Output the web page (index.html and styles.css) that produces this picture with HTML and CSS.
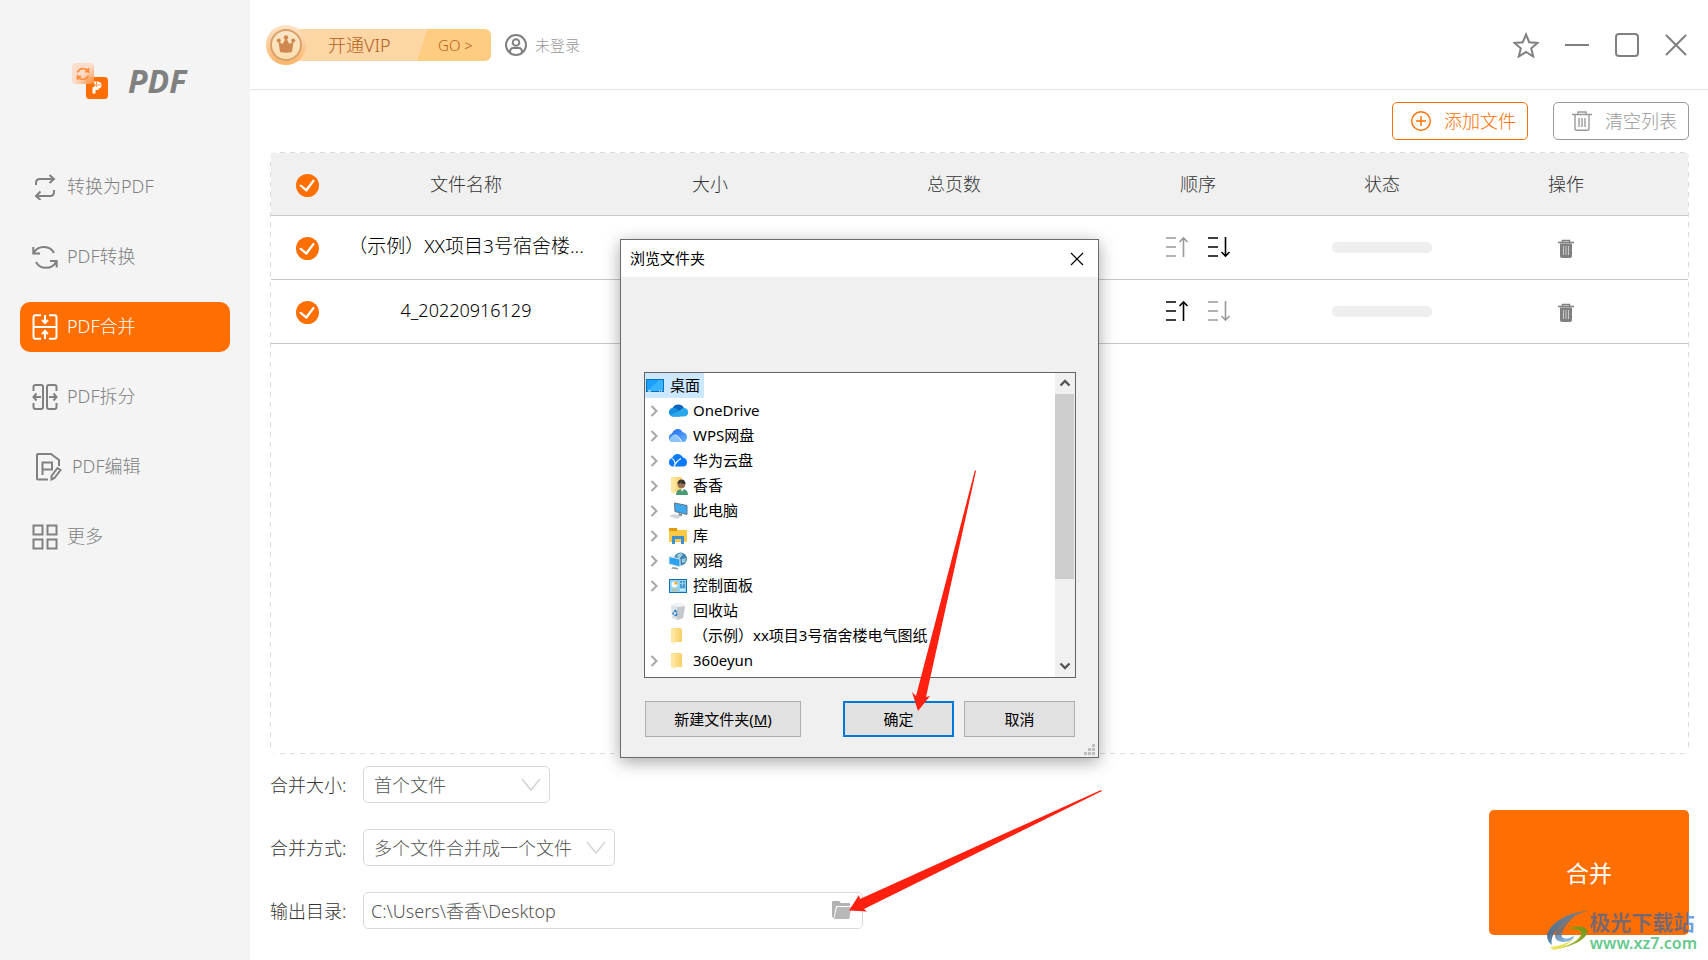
FILE: index.html
```html
<!DOCTYPE html>
<html lang="zh-CN">
<head>
<meta charset="utf-8">
<title>PDF</title>
<link rel="stylesheet" href="styles.css">
</head>
<body>
<svg class="defs" width="0" height="0" aria-hidden="true">
  <defs>
    <linearGradient id="medal" x1="0" y1="0" x2="0" y2="1"><stop offset="0" stop-color="#fde3c8"/><stop offset="1" stop-color="#fbb568"/></linearGradient>
    <linearGradient id="coin" x1="0" y1="0" x2="0" y2="1"><stop offset="0" stop-color="#f9e6c8"/><stop offset="1" stop-color="#fbdfae"/></linearGradient>
    <linearGradient id="fade" x1="0" y1="0" x2="1" y2="1"><stop offset=".5" stop-color="#fbdcc8"/><stop offset="1" stop-color="#ff8a36"/></linearGradient>
    <linearGradient id="folder" x1="0" y1="0" x2="1" y2="0"><stop offset="0" stop-color="#ffe9a6"/><stop offset="1" stop-color="#f7cf66"/></linearGradient>
    <linearGradient id="swirl" x1="0" y1="0" x2=".4" y2="1"><stop offset="0" stop-color="#7a8a90"/><stop offset=".6" stop-color="#56708c"/><stop offset="1" stop-color="#5f9fd8"/></linearGradient>
    <linearGradient id="swirl2" x1="1" y1="0" x2="0" y2="1"><stop offset="0" stop-color="#6f8f10"/><stop offset=".6" stop-color="#9cb832"/><stop offset="1" stop-color="#f2e668"/></linearGradient>
    <linearGradient id="wps" x1="0" y1="0" x2="1" y2="1"><stop offset="0" stop-color="#1a66f0"/><stop offset="1" stop-color="#69b4ff"/></linearGradient>
  </defs>
  <symbol id="i-up" viewBox="0 0 24 22"><path d="M1 2h10M1 11h10M1 20h10M18.500 21V2M14.500 6l4-4 4 4"/></symbol>
  <symbol id="i-down" viewBox="0 0 24 22"><path d="M1 2h10M1 11h10M1 20h10M18.500 1v19M14.500 16l4 4 4-4"/></symbol>
  <symbol id="i-trash" viewBox="0 0 18 20"><path d="M5.500 3V1.500h7V3M1 3.500h16" fill="none" stroke="#808080" stroke-width="1.600"/><path d="M3 4.500h12V17q0 2-2 2H5q-2 0-2-2z" fill="#808080"/><path d="M6.500 7v9M9 7v9M11.500 7v9" stroke="#ccc" stroke-width="1"/></symbol>
  <symbol id="i-chev" viewBox="0 0 8 12"><path d="M1.500 1l5 5-5 5" fill="none" stroke="#a6a6a6" stroke-width="2"/></symbol>
  <symbol id="i-folder" viewBox="0 0 20 18"><path d="M3 1h9l2 1v13H5l-2-1z" fill="url(#folder)"/><path d="M3 1l4 2v14l-4-2z" fill="#ffe7a0"/></symbol>
</svg>

<aside class="sidebar">
  <div class="brand">
    <svg width="36" height="36" viewBox="0 0 36 36"><rect x="14" y="14" width="22" height="22" rx="3.500" fill="#ff6e00"/><path d="M21.500 18.500h3q5 0 5 3.500t-3 3.500v1.500h-3v3.500h-3v-6l3-1.500z" fill="#fff"/><path d="M24.500 18v6M21 22h8" stroke="#ff9a4d" stroke-width="1"/><rect width="22" height="21" rx="4" fill="url(#fade)" opacity=".92"/><path d="M5.500 9.500a6 6 0 0 1 10-2l1 1V5M16.500 8.500H13M16.500 12.500a6 6 0 0 1-10 2l-1-1V17M5.500 13.500H9" fill="none" stroke="#ff8b3d" stroke-width="1.800"/></svg>
    <span>PDF</span>
  </div>
  <nav class="menu">
    <a href="#"><svg width="26" height="26" viewBox="0 0 26 26"><path d="M4 11V9q0-4 4-4h13M22 16v2q0 4-4 4H5M17.500 1l4.500 4-4.500 4M8.500 17.500L4 22l4.500 4"/></svg><span>转换为PDF</span></a>
    <a href="#"><svg width="26" height="26" viewBox="0 0 26 26"><path d="M2 8.500A11 10 0 0 1 22 9M24 18A11 10 0 0 1 4 18M1.300 3v6.500H8M24.700 23.500V17H18"/></svg><span>PDF转换</span></a>
    <a href="#" class="active"><svg width="26" height="26" viewBox="0 0 26 26"><path d="M9 1.200H3.500q-2 0-2 2v19.600q0 2 2 2H9M17 1.200h5.500q2 0 2 2v19.600q0 2-2 2H17M1 13h24M13 1v8M10 6l3 3 3-3M13 25v-8M10 20l3-3 3 3"/></svg><span>PDF合并</span></a>
    <a href="#"><svg width="26" height="26" viewBox="0 0 26 26"><path d="M1.500 7V3q0-2 2-2H9q2 0 2 2v20q0 2-2 2H3.500q-2 0-2-2v-4M24.500 7V3q0-2-2-2H17q-2 0-2 2v20q0 2 2 2h5.500q2 0 2-2v-4M9 13H1.500M4.500 9.500L1.500 13l3 3.500M17 13h7.500M21.500 9.500l3 3.500-3 3.500"/></svg><span>PDF拆分</span></a>
    <a href="#" class="edit"><svg width="26" height="28" viewBox="0 0 26 28"><path d="M12 26.500H2q-1 0-1-1V2q0-1 1-1h13l8 6v6M6.500 22V9.500H16v7H7M15.500 26.500v-3.500l6-8 3 2-6 8z"/></svg><span>PDF编辑</span></a>
    <a href="#"><svg width="26" height="26" viewBox="0 0 26 26"><path d="M1.500 1.500h9v9h-9zM15.500 1.500h9v9h-9zM1.500 15.500h9v9h-9zM15.500 15.500h9v9h-9z"/></svg><span>更多</span></a>
  </nav>
</aside>

<main class="main">
  <header class="topbar">
    <button class="vip" type="button">
      <svg class="medal" width="40" height="40" viewBox="0 0 40 40"><circle cx="20" cy="20" r="20" fill="url(#medal)"/><circle cx="20" cy="20" r="15" fill="url(#coin)" stroke="#d9a06c" stroke-width="2"/><path d="M14 27l-1.500-10.500 4 2.500L20 13l3.500 6 4-2.500L26 27q-6 1.500-12 0z" fill="#cf8850"/><circle cx="20" cy="12.500" r="2.200" fill="#cf8850"/><circle cx="12.800" cy="15.500" r="2" fill="#cf8850"/><circle cx="27.200" cy="15.500" r="2" fill="#cf8850"/></svg>
      <span class="vip-label">开通VIP</span><span class="vip-go">GO &gt;</span>
    </button>
    <button class="login" type="button"><svg width="22" height="22" viewBox="0 0 22 22"><circle cx="11" cy="11" r="10"/><circle cx="11" cy="8.500" r="3.300"/><path d="M5 18.500Q5 14 8 14h6q3 0 3 4.500"/></svg>未登录</button>
    <div class="window-tools">
      <button type="button" aria-label="收藏"><svg width="26" height="26" viewBox="0 0 26 26"><path d="M13 2.500l3.200 7.700 8.300.7-6.300 5.400 2 8.200-7.200-4.500-7.200 4.500 2-8.200L1.500 10.900l8.300-.7z"/></svg></button>
      <button type="button" aria-label="最小化"><svg width="24" height="24" viewBox="0 0 24 24"><path d="M0 12h24"/></svg></button>
      <button type="button" aria-label="最大化"><svg width="24" height="24" viewBox="0 0 24 24"><rect x="1" y="1" width="22" height="22" rx="3"/></svg></button>
      <button type="button" aria-label="关闭"><svg width="22" height="22" viewBox="0 0 22 22"><path d="M1 1l20 20M21 1L1 21"/></svg></button>
    </div>
  </header>

  <div class="toolbar">
    <button type="button" class="tool add"><svg width="20" height="20" viewBox="0 0 20 20"><circle cx="10" cy="10" r="9.300"/><path d="M10 5v10M5 10h10"/></svg>添加文件</button>
    <button type="button" class="tool clear"><svg width="20" height="20" viewBox="0 0 20 20"><path d="M0 3.500h20M6 3V1h8v2M3 4v13.500q0 1.800 1.800 1.800h10.400q1.800 0 1.800-1.800V4M7 7v9M10 7v9M13 7v9"/></svg>清空列表</button>
  </div>

  <section class="list">
    <table>
      <colgroup><col class="c-check"><col><col><col><col><col class="c-state"><col></colgroup>
      <thead><tr><th><input type="checkbox" checked aria-label="全选"></th><th>文件名称</th><th>大小</th><th>总页数</th><th>顺序</th><th>状态</th><th>操作</th></tr></thead>
      <tbody>
        <tr><td><input type="checkbox" checked aria-label="选择第1个文件"></td><td class="long">（示例）XX项目3号宿舍楼...</td><td>286.4KB</td><td>1</td>
          <td><div class="order"><button type="button" class="off" aria-label="上移"><svg width="24" height="22"><use href="#i-up"/></svg></button><button type="button" aria-label="下移"><svg width="24" height="22"><use href="#i-down"/></svg></button></div></td>
          <td><progress value="0" max="100" aria-label="进度"></progress></td><td><button type="button" aria-label="删除"><svg width="18" height="20"><use href="#i-trash"/></svg></button></td></tr>
        <tr><td><input type="checkbox" checked aria-label="选择第2个文件"></td><td>4_20220916129</td><td></td><td></td>
          <td><div class="order"><button type="button" aria-label="上移"><svg width="24" height="22"><use href="#i-up"/></svg></button><button type="button" class="off" aria-label="下移"><svg width="24" height="22"><use href="#i-down"/></svg></button></div></td>
          <td><progress value="0" max="100" aria-label="进度"></progress></td><td><button type="button" aria-label="删除"><svg width="18" height="20"><use href="#i-trash"/></svg></button></td></tr>
      </tbody>
    </table>
  </section>

  <footer class="options">
    <form class="form">
      <div class="row"><label for="size">合并大小:</label><div class="pick short"><select id="size"><option>首个文件</option></select><svg width="20" height="14" viewBox="0 0 20 14"><path d="M1 1l9 11 9-11"/></svg></div></div>
      <div class="row"><label for="mode">合并方式:</label><div class="pick wide"><select id="mode"><option>多个文件合并成一个文件</option></select><svg width="20" height="14" viewBox="0 0 20 14"><path d="M1 1l9 11 9-11"/></svg></div></div>
      <div class="row"><label for="path">输出目录:</label><div class="path"><input id="path" type="text" value="C:\Users\香香\Desktop"><button type="button" aria-label="浏览"><svg width="19" height="18" viewBox="0 0 19 18"><path d="M0 1q0-1 1-1h6l2 2h8q1 0 1 1v2H4L1.500 17Q0 17 0 15z" fill="#b2b2b2"/><path d="M5 6h13q1 0 1 1l-1.500 10q0 1-1 1H2z" fill="#b8b8b8"/></svg></button>
        <svg class="arrow-path" width="256" height="124" viewBox="0 0 256 124"><path d="M253 0l1 1L16 119l3 2.500-18-1L11 105l1 4z" fill="#ff2010"/></svg></div></div>
    </form>
    <div class="submit">
      <button type="button" class="merge">合并</button>
      <div class="mark">
        <svg width="44" height="40" viewBox="0 0 44 40"><path d="M42 0C22 1 4 12 1 24q0 7 5 10C3 20 22 4 42 0z" fill="url(#swirl)"/><path d="M30 4C16 9 8 18 9 26q2 7 14 4 5-2 5-5-9 5-12 1-2-7 14-22z" fill="url(#swirl)" opacity=".8"/><path d="M22 17q16-4 19 2c3 8-17 19-38 20 20-3 33-11 32-17-1-5-8-3-13-5z" fill="url(#swirl2)"/><path d="M4 36q14-1 24-9-7 9-20 12z" fill="#e9e45e"/></svg>
        <div class="mark-text"><b>极光下载站</b><span>www.xz7.com</span></div>
      </div>
    </div>
  </footer>
</main>

<div class="dialog" role="dialog" aria-labelledby="dlg-title">
  <div class="dlg-head"><span id="dlg-title">浏览文件夹</span><button type="button" aria-label="关闭"><svg width="14" height="14" viewBox="0 0 14 14"><path d="M1 1l12 12M13 1L1 13" stroke="#000" stroke-width="1.200"/></svg></button></div>
  <div class="dlg-body">
    <div class="tree">
      <ul>
        <li class="root"><span><svg width="20" height="18" viewBox="0 0 20 18"><rect x="1.500" y="2.500" width="17" height="12" fill="#18a0fb" stroke="#0a70b8"/><path d="M2 14L14 3h4v11z" fill="#36b2ff"/><path d="M3 14h3M14 14h1M16 14h1" stroke="#fff"/></svg>桌面</span></li>
        <li><svg class="chev"><use href="#i-chev"/></svg><svg width="20" height="18" viewBox="0 0 20 18"><path d="M5 14.500a4.500 4.500 0 0 1-.5-8.500A6.500 6.500 0 0 1 16 6l-4 8.500z" fill="#0a64b8"/><path d="M4.500 6q3-.8 6 2L2 13.500A4.500 4.500 0 0 1 4.500 6z" fill="#1490df"/><path d="M2 13l11-5.500q1-2 3-1.500a4.200 4.200 0 0 1 0 8.500H5q-2 0-3-1.500z" fill="#28a8ea"/></svg>OneDrive</li>
        <li><svg class="chev"><use href="#i-chev"/></svg><svg width="20" height="18" viewBox="0 0 20 18"><path d="M4 15A4.500 4.500 0 0 1 4 6.500Q6 2 10 2q3 0 4.500 3 4.500 1 4.500 5 0 5-4 5z" fill="url(#wps)"/><path d="M1.500 12Q4 6.500 8 8q3 1.500 6 7H4q-2-1-2.500-3z" fill="#8cc4ff"/><path d="M7 8q3 0 7 7" fill="none" stroke="#e8f4ff"/></svg>WPS网盘</li>
        <li><svg class="chev"><use href="#i-chev"/></svg><svg width="20" height="18" viewBox="0 0 20 18"><path d="M4 14.500A4.500 4.500 0 0 1 4 6Q6 2 9.500 2 13 2 15 5.500q4 1 4 5 0 4-4 4z" fill="#0a7bff"/><path d="M4.500 6.500q2.500 2 2.500 5M6 14.500q2-5 7-8" fill="none" stroke="#fff" stroke-width="1.200"/></svg>华为云盘</li>
        <li><svg class="chev"><use href="#i-chev"/></svg><svg width="20" height="18" viewBox="0 0 20 18"><path d="M3 0h10l1 1v14H5l-2-1z" fill="url(#folder)"/><path d="M3 0l4 2v15l-4-2z" fill="#ffe7a0"/><path d="M8 18q0-6 6-6t6 6z" fill="#4b9a76"/><path d="M13 12l1 3 1.500-3z" fill="#fff"/><circle cx="13.500" cy="7.500" r="3.800" fill="#9b7052"/><path d="M9.500 7q0-4.500 4-4.500T17.500 7q-4 0-5-1.500Q11 7 9.500 7z" fill="#3a3532"/></svg>香香</li>
        <li><svg class="chev"><use href="#i-chev"/></svg><svg width="20" height="18" viewBox="0 0 20 18"><path d="M6.500 1l12.500 2.500v9L7 9.500z" fill="#3fa9ee" stroke="#5e7382"/><path d="M11 11l3 1v2h-4z" fill="#7a8790"/><path d="M1 14l5-2 8 2-5 3z" fill="#cfd5d9"/></svg>此电脑</li>
        <li><svg class="chev"><use href="#i-chev"/></svg><svg width="20" height="18" viewBox="0 0 20 18"><path d="M1 1h7l2 2h9v12H1z" fill="#fcc944"/><path d="M1 1h8v3H1z" fill="#e19b10"/><path d="M4 17V9h12v8h-3v-5H7v5z" fill="#3a90d0"/></svg>库</li>
        <li><svg class="chev"><use href="#i-chev"/></svg><svg width="20" height="18" viewBox="0 0 20 18"><circle cx="12.500" cy="7" r="6.500" fill="#3f84b4"/><path d="M9 3q3-3 6-1l-2 3-3 2zM14 7l4-1-1 4-3 1z" fill="#9fd0d4"/><path d="M1 4.500l11 2.500v8L1 12z" fill="#2da3ee" stroke="#d8e6ee"/><path d="M5 15l5 1v1.500l-7-1z" fill="#8d989f"/></svg>网络</li>
        <li><svg class="chev"><use href="#i-chev"/></svg><svg width="20" height="18" viewBox="0 0 20 18"><rect x="1.500" y="2.500" width="17" height="13" fill="#8fd3fa" stroke="#1272ae"/><circle cx="6.500" cy="7.500" r="3" fill="#fff"/><path d="M6.500 7.500V4.500a3 3 0 0 1 3 3z" fill="#f3a41c"/><path d="M12 5h2M15 5h2M12 8h2M15 8h2M12 10h5" stroke="#0f5f99"/><path d="M4 13h6" stroke="#f3a41c"/><path d="M12 13h5" stroke="#fff"/></svg>控制面板</li>
        <li class="leaf"><svg width="20" height="18" viewBox="0 0 20 18"><path d="M3 3l5-2 8 1 1 3-2 11-6 2-5-2z" fill="#dfe3e6"/><path d="M3 3l7 2 7-1-2 12-6 2V5z" fill="#c3c8cc"/><path d="M3 3l5-2 8 1 1 2-7 1z" fill="#f1f3f4"/><path d="M6 9.500l1.500-1 1 2M9 11.500l-1 2H6.500M5.500 12.500l-.5-2" fill="none" stroke="#1477c8" stroke-width="1.500"/></svg>回收站</li>
        <li class="leaf"><svg width="20" height="18"><use href="#i-folder"/></svg>（示例）xx项目3号宿舍楼电气图纸</li>
        <li><svg class="chev"><use href="#i-chev"/></svg><svg width="20" height="18"><use href="#i-folder"/></svg>360eyun</li>
      </ul>
      <div class="scroll"><svg width="12" height="8" viewBox="0 0 12 8"><path d="M1.500 6.500L6 2l4.500 4.500"/></svg><i></i><svg width="12" height="8" viewBox="0 0 12 8"><path d="M1.500 1.500L6 6l4.500-4.500"/></svg></div>
    </div>
    <div class="dlg-actions">
      <button type="button" class="new">新建文件夹(<u>M</u>)</button>
      <button type="button" class="ok">确定</button>
      <button type="button">取消</button>
    </div>
  </div>
  <svg class="grip" width="11" height="11" viewBox="0 0 11 11"><path d="M8 0h3v3H8zM4 4h3v3H4zM8 4h3v3H8zM0 8h3v3H0zM4 8h3v3H4zM8 8h3v3H8z" fill="#bfbfbf"/></svg>
  <svg class="arrow-ok" width="66" height="242" viewBox="0 0 66 242"><path d="M64 0l1 1L15 227l4-1L7 241 1 222l4 4z" fill="#ff2010"/></svg>
</div>
</body>
</html>
```
FILE: styles.css
```css
* { box-sizing: border-box; }
body {
  margin: 0;
  min-height: 100vh;
  display: flex;
  position: relative;
  background: #fff;
  color: #333;
  font: 300 18px/24px "Noto Sans", "Noto Sans CJK SC", sans-serif;
}
button, input, select { font: inherit; color: inherit; margin: 0; }
button { padding: 0; border: 0; background: none; }
svg { display: block; flex: none; }
.defs { position: absolute; }

/* Sidebar */
.sidebar { width: 250px; flex: none; background: #f4f4f4; color: #808080; }
.brand {
  display: flex;
  align-items: center;
  gap: 20px;
  height: 162px;
  padding-left: 72px;
  font: italic 700 32px/40px "Noto Sans", sans-serif;
}
.menu { display: grid; gap: 20px; padding: 0 20px; }
.menu a {
  display: flex;
  align-items: center;
  gap: 9px;
  height: 50px;
  padding-left: 12px;
  border-radius: 10px;
  color: inherit;
  text-decoration: none;
}
.menu span { padding-bottom: 2px; }
.menu svg { fill: none; stroke: currentColor; stroke-width: 2; }
.menu .edit { padding-left: 16px; gap: 10px; }
.menu .active { background: #ff6e00; color: #fff; }

/* Header */
.main { flex: 1; min-width: 0; display: flex; flex-direction: column; }
.topbar {
  display: flex;
  align-items: center;
  height: 90px;
  padding: 0 21px 0 16px;
  border-bottom: 1px solid #e6e6e6;
}
.vip {
  position: relative;
  display: flex;
  height: 32px;
  width: 221px;
  margin-left: 4px;
  border-radius: 6px;
  background: linear-gradient(108deg, #fdd6a5 68%, #ffcd82 68%);
  color: #b3611d;
  line-height: 32px;
}
.medal { position: absolute; left: -4px; top: -4px; }
.vip-label { width: 150px; padding-left: 58px; text-align: left; white-space: nowrap; }
.vip-go { flex: 1; font-size: 15px; text-align: center; }
.login { display: flex; align-items: center; gap: 8px; margin-left: 14px; font-size: 15px; color: #999; }
.login svg { fill: none; stroke: #808080; stroke-width: 2; }
.window-tools { display: flex; align-items: center; gap: 26px; margin-left: auto; }
.window-tools svg { fill: none; stroke: #808080; stroke-width: 2; }

/* Toolbar */
.toolbar { display: flex; justify-content: flex-end; gap: 25px; padding: 12px 19px; }
.tool {
  display: flex;
  align-items: center;
  gap: 13px;
  width: 136px;
  height: 38px;
  padding-left: 18px;
  border: 1px solid #999;
  border-radius: 5px;
  color: #999;
}
.tool svg { fill: none; stroke: currentColor; stroke-width: 1.4; }
.add { border-color: #ff6e00; color: #ff6e00; }

/* File list, framed by long dashes on each side */
.list {
  flex: 1;
  margin: 0 19px 0 20px;
  padding: 1px;
  border-radius: 6px;
  background:
    repeating-linear-gradient(90deg, #dcdcdc 0 5px, transparent 5px 10px) top / 100% 1px no-repeat,
    repeating-linear-gradient(90deg, #dcdcdc 0 5px, transparent 5px 10px) bottom / 100% 1px no-repeat,
    repeating-linear-gradient(#dcdcdc 0 5px, transparent 5px 10px) left / 1px 100% no-repeat,
    repeating-linear-gradient(#dcdcdc 0 5px, transparent 5px 10px) right / 1px 100% no-repeat;
}
table { width: 100%; table-layout: fixed; border-collapse: collapse; text-align: center; }
.c-check { width: 73px; }
.c-state { width: 124px; }
th, td { height: 64px; padding: 0; border-bottom: 1px solid #c8c8c8; white-space: nowrap; }
th { height: 62px; background: #f0f0f0; font-weight: 300; }
td { color: #000; }
td:nth-child(2) { padding-bottom: 2px; }
.long { font-size: 19px; }
td button, th input, td input { vertical-align: middle; }
input[type="checkbox"] {
  appearance: none;
  width: 23px;
  height: 23px;
  border-radius: 50%;
  background: #ff6e00;
}
input[type="checkbox"]::before {
  content: "";
  display: block;
  height: 23px;
  background: #fff;
  clip-path: polygon(3px 12px, 5px 11px, 10px 15px, 17px 6px, 19px 7px, 11px 18px, 10px 18px);
}
.order { display: flex; justify-content: center; gap: 18px; }
.order svg { fill: none; stroke: #000; stroke-width: 1.6; }
.order .off svg { stroke: #999; }
progress {
  appearance: none;
  display: block;
  width: 100px;
  height: 11px;
  margin: 0 auto;
  border: 0;
  border-radius: 5px;
  overflow: hidden;
  background: #eee;
}
progress::-webkit-progress-bar { background: #eee; }

/* Output options */
.options { display: flex; justify-content: space-between; padding: 12px 19px 25px 20px; }
.form { display: grid; gap: 26px; align-content: start; padding-bottom: 6px; }
.row { display: flex; align-items: center; }
.row label { width: 93px; white-space: nowrap; }
.pick, .path { position: relative; height: 37px; }
.short { width: 187px; }
.wide { width: 252px; }
.path { width: 500px; }
select, .path input {
  width: 100%;
  height: 100%;
  padding: 0 10px;
  appearance: none;
  border: 1px solid #d9d9d9;
  border-radius: 5px;
  background: #fff;
  color: #555;
}
.path input { padding: 0 40px 2px 7px; }
.pick svg { position: absolute; right: 9px; top: 12px; fill: none; stroke: #d4d4d4; stroke-width: 1.5; pointer-events: none; }
.path button { position: absolute; right: 12px; top: 9px; }
.arrow-path { position: absolute; left: 485px; top: -102px; pointer-events: none; }
.submit { position: relative; align-self: flex-end; }
.merge { width: 200px; height: 125px; border-radius: 5px; background: #ff6e00; color: #fff; font-size: 23px; font-weight: 400; }
.mark { position: absolute; right: -8px; bottom: -18px; display: flex; }
.mark-text { display: grid; }
.mark-text b {
  font-size: 21px;
  line-height: 22px;
  font-weight: 700;
  color: transparent;
  background: linear-gradient(90deg, #776870 92%, #6fa3dc 92%);
  background-clip: text;
}
.mark-text span { font-size: 16px; line-height: 20px; font-weight: 600; color: #66c98c; }

/* Folder dialog */
.dialog {
  position: absolute;
  left: 620px;
  top: 239px;
  width: 479px;
  border: 1px solid #6b6b6b;
  background: #f0f0f0;
  box-shadow: 0 4px 16px rgba(0, 0, 0, 0.35);
  color: #000;
  font: 400 15px/25px "Noto Sans", "Noto Sans CJK SC", sans-serif;
}
.dlg-head { display: flex; justify-content: space-between; align-items: center; height: 37px; padding: 0 14px 0 9px; background: #fff; }
.dlg-body { padding: 95px 23px 20px; }
.tree { display: flex; height: 306px; margin-right: -1px; border: 1px solid #646464; background: #fff; }
.tree ul { flex: 1; margin: 0; padding: 0; list-style: none; white-space: nowrap; }
.tree li { display: flex; align-items: center; gap: 5px; height: 25px; padding-left: 5px; }
.tree .chev { width: 8px; height: 12px; margin-right: 5px; }
.tree .leaf { padding-left: 23px; }
.tree .root { padding: 0; }
.root span { display: flex; align-items: center; gap: 5px; padding-right: 4px; background: #cce8ff; }
.scroll { display: flex; flex-direction: column; align-items: center; width: 20px; background: #f0f0f0; }
.scroll svg { margin: 6px 0 7px; fill: none; stroke: #555; stroke-width: 2.4; }
.scroll i { width: 100%; height: 185px; margin-bottom: auto; background: #cdcdcd; border-right: 1px solid #f0f0f0; }
.dlg-actions { display: flex; gap: 10px; padding-top: 23px; }
.dlg-actions button { width: 111px; height: 36px; border: 1px solid #adadad; background: #e1e1e1; }
.dlg-actions .new { width: 156px; margin-right: auto; margin-left: 1px; }
.dlg-actions .ok { border: 2px solid #0078d7; }
.grip { position: absolute; right: 3px; bottom: 2px; }
.arrow-ok { position: absolute; left: 290px; top: 230px; pointer-events: none; }
```
